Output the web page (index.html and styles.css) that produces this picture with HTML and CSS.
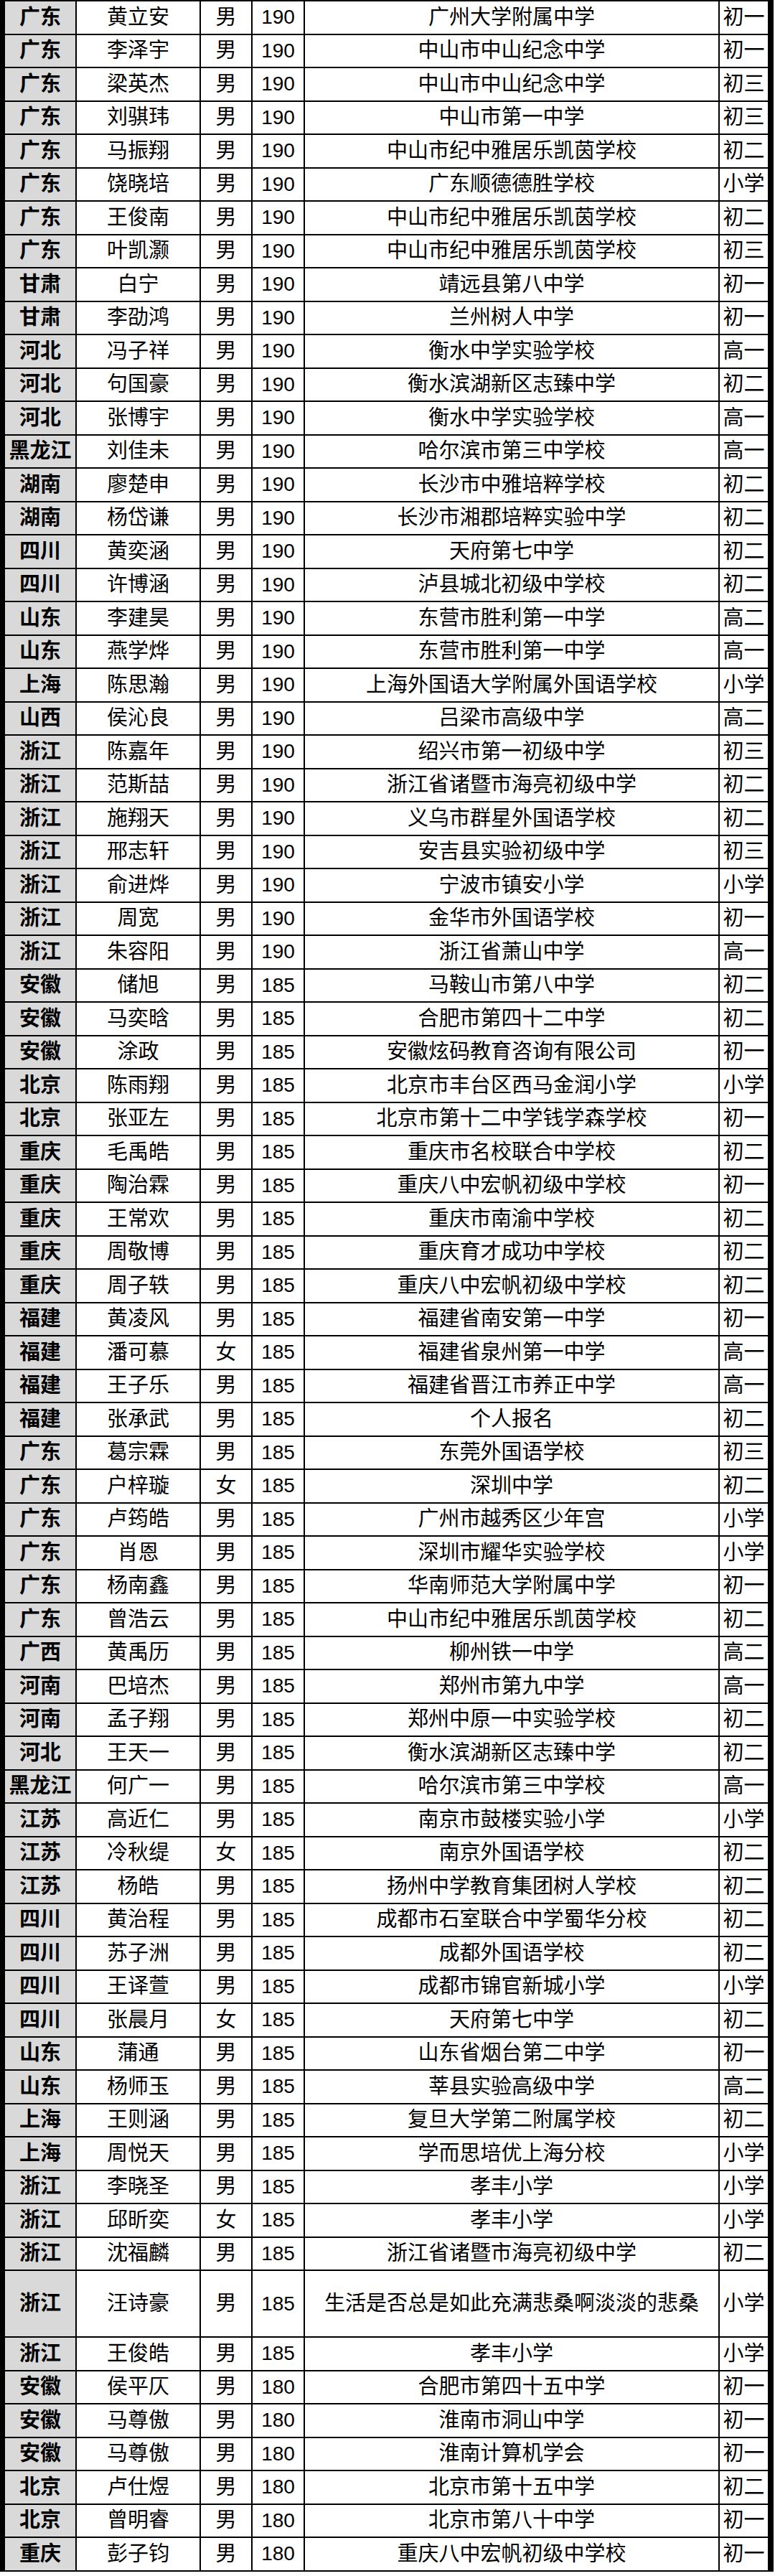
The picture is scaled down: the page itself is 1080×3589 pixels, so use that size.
FILE: index.html
```html
<!DOCTYPE html>
<html lang="zh-CN">
<head>
<meta charset="utf-8">
<title>成绩名单</title>
<link rel="stylesheet" href="styles.css">
</head>
<body>
<table class="roster">
<colgroup>
<col class="c-prov"><col class="c-name"><col class="c-sex"><col class="c-score"><col class="c-school"><col class="c-grade">
</colgroup>
<tbody>
<tr><td class="prov">广东</td><td>黄立安</td><td>男</td><td class="num">190</td><td>广州大学附属中学</td><td class="grade">初一</td></tr>
<tr><td class="prov">广东</td><td>李泽宇</td><td>男</td><td class="num">190</td><td>中山市中山纪念中学</td><td class="grade">初一</td></tr>
<tr><td class="prov">广东</td><td>梁英杰</td><td>男</td><td class="num">190</td><td>中山市中山纪念中学</td><td class="grade">初三</td></tr>
<tr><td class="prov">广东</td><td>刘骐玮</td><td>男</td><td class="num">190</td><td>中山市第一中学</td><td class="grade">初三</td></tr>
<tr><td class="prov">广东</td><td>马振翔</td><td>男</td><td class="num">190</td><td>中山市纪中雅居乐凯茵学校</td><td class="grade">初二</td></tr>
<tr><td class="prov">广东</td><td>饶晓培</td><td>男</td><td class="num">190</td><td>广东顺德德胜学校</td><td class="grade">小学</td></tr>
<tr><td class="prov">广东</td><td>王俊南</td><td>男</td><td class="num">190</td><td>中山市纪中雅居乐凯茵学校</td><td class="grade">初二</td></tr>
<tr><td class="prov">广东</td><td>叶凯灏</td><td>男</td><td class="num">190</td><td>中山市纪中雅居乐凯茵学校</td><td class="grade">初三</td></tr>
<tr><td class="prov">甘肃</td><td>白宁</td><td>男</td><td class="num">190</td><td>靖远县第八中学</td><td class="grade">初一</td></tr>
<tr><td class="prov">甘肃</td><td>李劭鸿</td><td>男</td><td class="num">190</td><td>兰州树人中学</td><td class="grade">初一</td></tr>
<tr><td class="prov">河北</td><td>冯子祥</td><td>男</td><td class="num">190</td><td>衡水中学实验学校</td><td class="grade">高一</td></tr>
<tr><td class="prov">河北</td><td>句国豪</td><td>男</td><td class="num">190</td><td>衡水滨湖新区志臻中学</td><td class="grade">初二</td></tr>
<tr><td class="prov">河北</td><td>张博宇</td><td>男</td><td class="num">190</td><td>衡水中学实验学校</td><td class="grade">高一</td></tr>
<tr><td class="prov">黑龙江</td><td>刘佳未</td><td>男</td><td class="num">190</td><td>哈尔滨市第三中学校</td><td class="grade">高一</td></tr>
<tr><td class="prov">湖南</td><td>廖楚申</td><td>男</td><td class="num">190</td><td>长沙市中雅培粹学校</td><td class="grade">初二</td></tr>
<tr><td class="prov">湖南</td><td>杨岱谦</td><td>男</td><td class="num">190</td><td>长沙市湘郡培粹实验中学</td><td class="grade">初二</td></tr>
<tr><td class="prov">四川</td><td>黄奕涵</td><td>男</td><td class="num">190</td><td>天府第七中学</td><td class="grade">初二</td></tr>
<tr><td class="prov">四川</td><td>许博涵</td><td>男</td><td class="num">190</td><td>泸县城北初级中学校</td><td class="grade">初二</td></tr>
<tr><td class="prov">山东</td><td>李建昊</td><td>男</td><td class="num">190</td><td>东营市胜利第一中学</td><td class="grade">高二</td></tr>
<tr><td class="prov">山东</td><td>燕学烨</td><td>男</td><td class="num">190</td><td>东营市胜利第一中学</td><td class="grade">高一</td></tr>
<tr><td class="prov">上海</td><td>陈思瀚</td><td>男</td><td class="num">190</td><td>上海外国语大学附属外国语学校</td><td class="grade">小学</td></tr>
<tr><td class="prov">山西</td><td>侯沁良</td><td>男</td><td class="num">190</td><td>吕梁市高级中学</td><td class="grade">高二</td></tr>
<tr><td class="prov">浙江</td><td>陈嘉年</td><td>男</td><td class="num">190</td><td>绍兴市第一初级中学</td><td class="grade">初三</td></tr>
<tr><td class="prov">浙江</td><td>范斯喆</td><td>男</td><td class="num">190</td><td>浙江省诸暨市海亮初级中学</td><td class="grade">初二</td></tr>
<tr><td class="prov">浙江</td><td>施翔天</td><td>男</td><td class="num">190</td><td>义乌市群星外国语学校</td><td class="grade">初二</td></tr>
<tr><td class="prov">浙江</td><td>邢志轩</td><td>男</td><td class="num">190</td><td>安吉县实验初级中学</td><td class="grade">初三</td></tr>
<tr><td class="prov">浙江</td><td>俞进烨</td><td>男</td><td class="num">190</td><td>宁波市镇安小学</td><td class="grade">小学</td></tr>
<tr><td class="prov">浙江</td><td>周宽</td><td>男</td><td class="num">190</td><td>金华市外国语学校</td><td class="grade">初一</td></tr>
<tr><td class="prov">浙江</td><td>朱容阳</td><td>男</td><td class="num">190</td><td>浙江省萧山中学</td><td class="grade">高一</td></tr>
<tr><td class="prov">安徽</td><td>储旭</td><td>男</td><td class="num">185</td><td>马鞍山市第八中学</td><td class="grade">初二</td></tr>
<tr><td class="prov">安徽</td><td>马奕晗</td><td>男</td><td class="num">185</td><td>合肥市第四十二中学</td><td class="grade">初二</td></tr>
<tr><td class="prov">安徽</td><td>涂政</td><td>男</td><td class="num">185</td><td>安徽炫码教育咨询有限公司</td><td class="grade">初一</td></tr>
<tr><td class="prov">北京</td><td>陈雨翔</td><td>男</td><td class="num">185</td><td>北京市丰台区西马金润小学</td><td class="grade">小学</td></tr>
<tr><td class="prov">北京</td><td>张亚左</td><td>男</td><td class="num">185</td><td>北京市第十二中学钱学森学校</td><td class="grade">初一</td></tr>
<tr><td class="prov">重庆</td><td>毛禹皓</td><td>男</td><td class="num">185</td><td>重庆市名校联合中学校</td><td class="grade">初二</td></tr>
<tr><td class="prov">重庆</td><td>陶治霖</td><td>男</td><td class="num">185</td><td>重庆八中宏帆初级中学校</td><td class="grade">初一</td></tr>
<tr><td class="prov">重庆</td><td>王常欢</td><td>男</td><td class="num">185</td><td>重庆市南渝中学校</td><td class="grade">初二</td></tr>
<tr><td class="prov">重庆</td><td>周敬博</td><td>男</td><td class="num">185</td><td>重庆育才成功中学校</td><td class="grade">初二</td></tr>
<tr><td class="prov">重庆</td><td>周子轶</td><td>男</td><td class="num">185</td><td>重庆八中宏帆初级中学校</td><td class="grade">初二</td></tr>
<tr><td class="prov">福建</td><td>黄凌风</td><td>男</td><td class="num">185</td><td>福建省南安第一中学</td><td class="grade">初一</td></tr>
<tr><td class="prov">福建</td><td>潘可慕</td><td>女</td><td class="num">185</td><td>福建省泉州第一中学</td><td class="grade">高一</td></tr>
<tr><td class="prov">福建</td><td>王子乐</td><td>男</td><td class="num">185</td><td>福建省晋江市养正中学</td><td class="grade">高一</td></tr>
<tr><td class="prov">福建</td><td>张承武</td><td>男</td><td class="num">185</td><td>个人报名</td><td class="grade">初二</td></tr>
<tr><td class="prov">广东</td><td>葛宗霖</td><td>男</td><td class="num">185</td><td>东莞外国语学校</td><td class="grade">初三</td></tr>
<tr><td class="prov">广东</td><td>户梓璇</td><td>女</td><td class="num">185</td><td>深圳中学</td><td class="grade">初二</td></tr>
<tr><td class="prov">广东</td><td>卢筠皓</td><td>男</td><td class="num">185</td><td>广州市越秀区少年宫</td><td class="grade">小学</td></tr>
<tr><td class="prov">广东</td><td>肖恩</td><td>男</td><td class="num">185</td><td>深圳市耀华实验学校</td><td class="grade">小学</td></tr>
<tr><td class="prov">广东</td><td>杨南鑫</td><td>男</td><td class="num">185</td><td>华南师范大学附属中学</td><td class="grade">初一</td></tr>
<tr><td class="prov">广东</td><td>曾浩云</td><td>男</td><td class="num">185</td><td>中山市纪中雅居乐凯茵学校</td><td class="grade">初二</td></tr>
<tr><td class="prov">广西</td><td>黄禹历</td><td>男</td><td class="num">185</td><td>柳州铁一中学</td><td class="grade">高二</td></tr>
<tr><td class="prov">河南</td><td>巴培杰</td><td>男</td><td class="num">185</td><td>郑州市第九中学</td><td class="grade">高一</td></tr>
<tr><td class="prov">河南</td><td>孟子翔</td><td>男</td><td class="num">185</td><td>郑州中原一中实验学校</td><td class="grade">初二</td></tr>
<tr><td class="prov">河北</td><td>王天一</td><td>男</td><td class="num">185</td><td>衡水滨湖新区志臻中学</td><td class="grade">初二</td></tr>
<tr><td class="prov">黑龙江</td><td>何广一</td><td>男</td><td class="num">185</td><td>哈尔滨市第三中学校</td><td class="grade">高一</td></tr>
<tr><td class="prov">江苏</td><td>高近仁</td><td>男</td><td class="num">185</td><td>南京市鼓楼实验小学</td><td class="grade">小学</td></tr>
<tr><td class="prov">江苏</td><td>冷秋缇</td><td>女</td><td class="num">185</td><td>南京外国语学校</td><td class="grade">初二</td></tr>
<tr><td class="prov">江苏</td><td>杨皓</td><td>男</td><td class="num">185</td><td>扬州中学教育集团树人学校</td><td class="grade">初二</td></tr>
<tr><td class="prov">四川</td><td>黄治程</td><td>男</td><td class="num">185</td><td>成都市石室联合中学蜀华分校</td><td class="grade">初二</td></tr>
<tr><td class="prov">四川</td><td>苏子洲</td><td>男</td><td class="num">185</td><td>成都外国语学校</td><td class="grade">初二</td></tr>
<tr><td class="prov">四川</td><td>王译萱</td><td>男</td><td class="num">185</td><td>成都市锦官新城小学</td><td class="grade">小学</td></tr>
<tr><td class="prov">四川</td><td>张晨月</td><td>女</td><td class="num">185</td><td>天府第七中学</td><td class="grade">初二</td></tr>
<tr><td class="prov">山东</td><td>蒲通</td><td>男</td><td class="num">185</td><td>山东省烟台第二中学</td><td class="grade">初一</td></tr>
<tr><td class="prov">山东</td><td>杨师玉</td><td>男</td><td class="num">185</td><td>莘县实验高级中学</td><td class="grade">高二</td></tr>
<tr><td class="prov">上海</td><td>王则涵</td><td>男</td><td class="num">185</td><td>复旦大学第二附属学校</td><td class="grade">初二</td></tr>
<tr><td class="prov">上海</td><td>周悦天</td><td>男</td><td class="num">185</td><td>学而思培优上海分校</td><td class="grade">小学</td></tr>
<tr><td class="prov">浙江</td><td>李晓圣</td><td>男</td><td class="num">185</td><td>孝丰小学</td><td class="grade">小学</td></tr>
<tr><td class="prov">浙江</td><td>邱昕奕</td><td>女</td><td class="num">185</td><td>孝丰小学</td><td class="grade">小学</td></tr>
<tr><td class="prov">浙江</td><td>沈福麟</td><td>男</td><td class="num">185</td><td>浙江省诸暨市海亮初级中学</td><td class="grade">初二</td></tr>
<tr class="tall"><td class="prov">浙江</td><td>汪诗豪</td><td>男</td><td class="num">185</td><td>生活是否总是如此充满悲桑啊淡淡的悲桑</td><td class="grade">小学</td></tr>
<tr><td class="prov">浙江</td><td>王俊皓</td><td>男</td><td class="num">185</td><td>孝丰小学</td><td class="grade">小学</td></tr>
<tr><td class="prov">安徽</td><td>侯平仄</td><td>男</td><td class="num">180</td><td>合肥市第四十五中学</td><td class="grade">初一</td></tr>
<tr><td class="prov">安徽</td><td>马尊傲</td><td>男</td><td class="num">180</td><td>淮南市洞山中学</td><td class="grade">初一</td></tr>
<tr><td class="prov">安徽</td><td>马尊傲</td><td>男</td><td class="num">180</td><td>淮南计算机学会</td><td class="grade">初一</td></tr>
<tr><td class="prov">北京</td><td>卢仕煜</td><td>男</td><td class="num">180</td><td>北京市第十五中学</td><td class="grade">初二</td></tr>
<tr><td class="prov">北京</td><td>曾明睿</td><td>男</td><td class="num">180</td><td>北京市第八十中学</td><td class="grade">初一</td></tr>
<tr><td class="prov">重庆</td><td>彭子钧</td><td>男</td><td class="num">180</td><td>重庆八中宏帆初级中学校</td><td class="grade">初一</td></tr>
</tbody>
</table>
</body>
</html>
```
FILE: styles.css
```css
html, body {
  margin: 0;
  padding: 0;
  background: #ffffff;
}

body {
  height: 3589px;
  overflow: hidden;
}

.roster {
  table-layout: fixed;
  border-collapse: separate;
  border-spacing: 0;
  width: 1078px;
  border-left: 7px solid #000;
  border-right: 8px solid #000;
  border-top: 2px solid #000;
  font-family: "Liberation Sans", "Noto Sans CJK SC", sans-serif;
  font-size: 29px;
  color: #000;
}

.c-prov { width: 100px; }
.c-name { width: 173px; }
.c-sex { width: 72px; }
.c-score { width: 73px; }
.c-school { width: 578px; }
.c-grade { width: 67px; }

.roster tr {
  height: 46.5px;
}

.roster tr.tall {
  height: 93px;
}

.roster td {
  padding: 0;
  border-right: 2px solid #000;
  border-bottom: 2px solid #000;
  text-align: center;
  vertical-align: middle;
  line-height: 1.2;
  white-space: nowrap;
  overflow: hidden;
  background: #fff;
}

.roster td.grade {
  border-right: 0;
}

.roster td.prov {
  background: #d9d9d9;
  font-weight: 700;
}

.roster td.num {
  font-size: 28px;
}
```
